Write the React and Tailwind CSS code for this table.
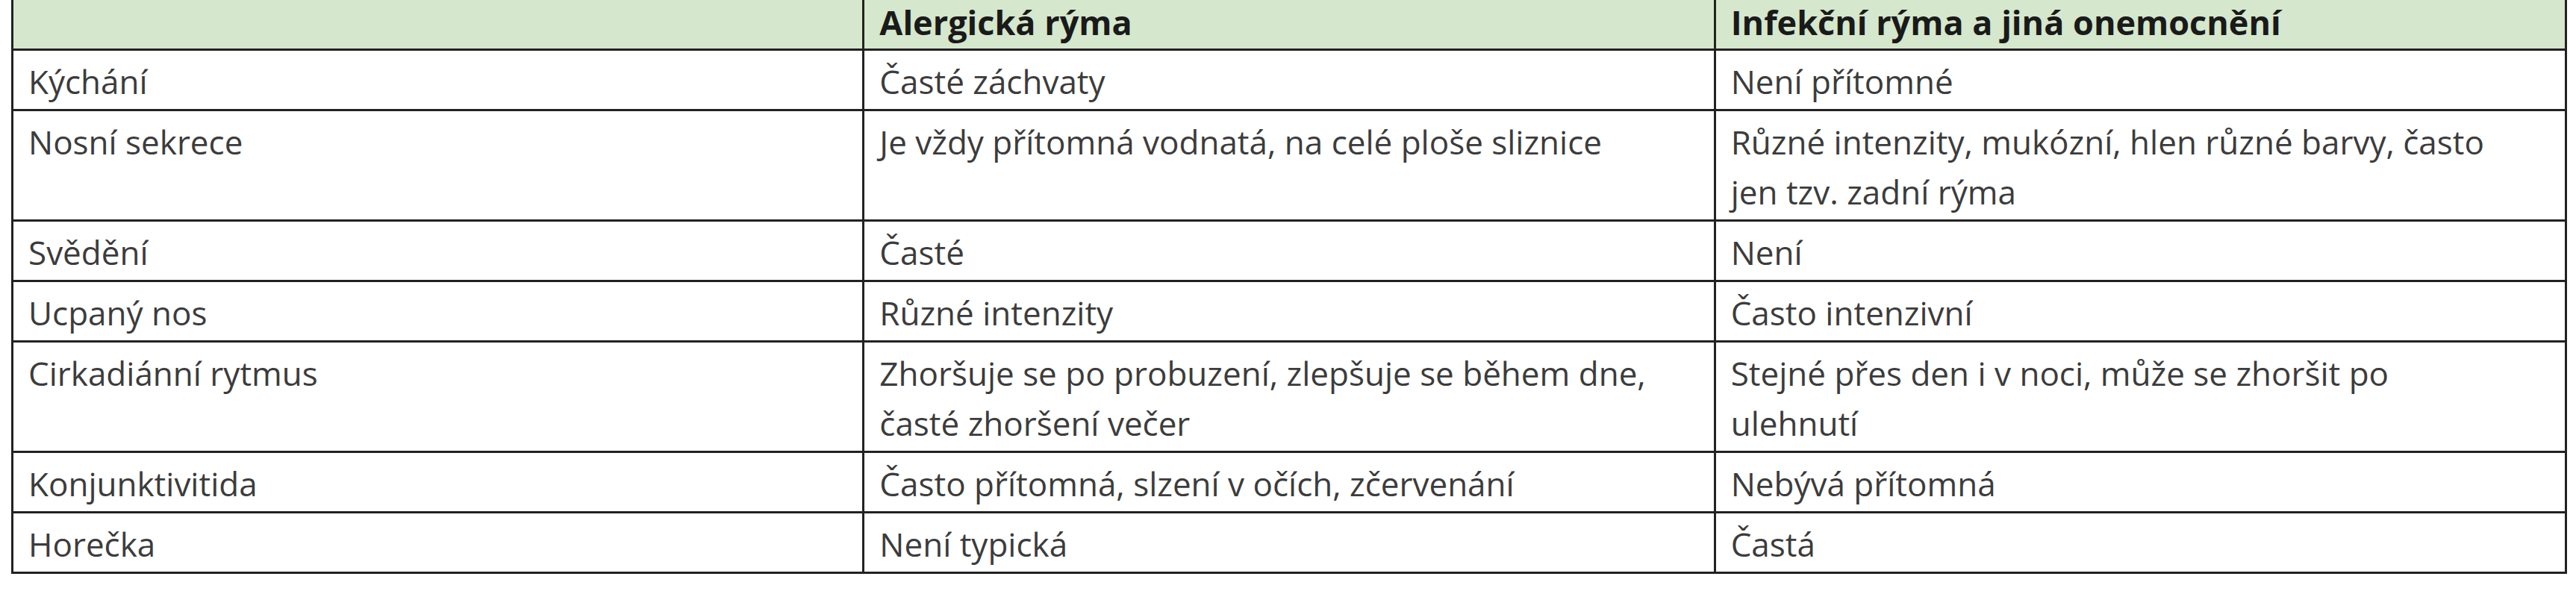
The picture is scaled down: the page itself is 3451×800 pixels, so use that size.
import React from "react";

const headers = ["", "Alergická rýma", "Infekční rýma a jiná onemocnění"];

const rows = [
  ["Kýchání", ["Časté záchvaty"], ["Není přítomné"]],
  [
    "Nosní sekrece",
    ["Je vždy přítomná vodnatá, na celé ploše sliznice"],
    ["Různé intenzity, mukózní, hlen různé barvy, často", "jen tzv. zadní rýma"],
  ],
  ["Svědění", ["Časté"], ["Není"]],
  ["Ucpaný nos", ["Různé intenzity"], ["Často intenzivní"]],
  [
    "Cirkadiánní rytmus",
    ["Zhoršuje se po probuzení, zlepšuje se během dne,", "časté zhoršení večer"],
    ["Stejné přes den i v noci, může se zhoršit po", "ulehnutí"],
  ],
  ["Konjunktivitida", ["Často přítomná, slzení v očích, zčervenání"], ["Nebývá přítomná"]],
  ["Horečka", ["Není typická"], ["Častá"]],
];

const Lines = ({ lines }) =>
  lines.map((line, i) => (
    <React.Fragment key={i}>
      {i > 0 && <br />}
      {line}
    </React.Fragment>
  ));

const App = () => {
  return (
    <div
      className="w-[3451px] h-[800px] bg-white overflow-hidden"
      style={{ fontFamily: '"Open Sans", "Noto Sans", sans-serif' }}
    >
      <table className="ml-[15px] w-[3424px] table-fixed border-collapse">
        <thead>
          <tr className="bg-[#d5e7cc]">
            {headers.map((h, i) => (
              <th
                key={i}
                className="h-[66px] border-[3px] border-t-0 border-[#222222] pl-[20px] pr-2 pt-0 pb-[5px] text-left align-bottom text-[45px] leading-[60px] font-bold text-[#1a1a1a] whitespace-nowrap"
              >
                {h}
              </th>
            ))}
          </tr>
        </thead>
        <tbody>
          {rows.map(([label, allergic, infectious]) => (
            <tr key={label}>
              <td className="border-[3px] border-[#222222] pl-[20px] pr-2 pt-[8px] pb-[3px] align-top text-[44px] leading-[67px] text-[#3c3c3c] whitespace-nowrap">
                {label}
              </td>
              <td className="border-[3px] border-[#222222] pl-[20px] pr-2 pt-[8px] pb-[3px] align-top text-[44px] leading-[67px] text-[#3c3c3c] whitespace-nowrap">
                <Lines lines={allergic} />
              </td>
              <td className="border-[3px] border-[#222222] pl-[20px] pr-2 pt-[8px] pb-[3px] align-top text-[44px] leading-[67px] text-[#3c3c3c] whitespace-nowrap">
                <Lines lines={infectious} />
              </td>
            </tr>
          ))}
        </tbody>
      </table>
    </div>
  );
};

export default App;
